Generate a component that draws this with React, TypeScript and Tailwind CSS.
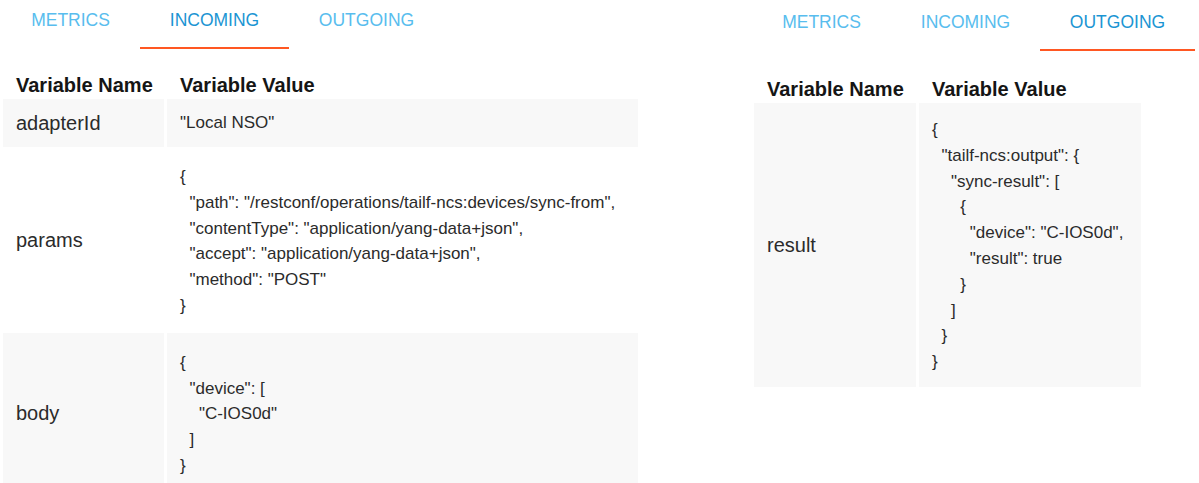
import React from 'react';

type Row = { name: string; value: unknown };

const incoming: Row[] = [
  { name: 'adapterId', value: 'Local NSO' },
  {
    name: 'params',
    value: {
      path: '/restconf/operations/tailf-ncs:devices/sync-from',
      contentType: 'application/yang-data+json',
      accept: 'application/yang-data+json',
      method: 'POST',
    },
  },
  { name: 'body', value: { device: ['C-IOS0d'] } },
];

const outgoing: Row[] = [
  {
    name: 'result',
    value: {
      'tailf-ncs:output': {
        'sync-result': [{ device: 'C-IOS0d', result: true }],
      },
    },
  },
];

const tabs = [
  { label: 'METRICS', w: 'w-[139px]' },
  { label: 'INCOMING', w: 'w-[149px]' },
  { label: 'OUTGOING', w: 'w-[155px]' },
];

function Tabs({ active }: { active: string }) {
  return (
    <div className="flex pl-[1px]">
      {tabs.map((t) => (
        <div
          key={t.label}
          className={`${t.w} h-[49px] pt-[8px] text-center text-[17.5px] leading-[24px] border-b-2 ${
            t.label === active ? 'border-[#ff5722] text-[#1b95d3]' : 'border-transparent text-[#58bdee]'
          }`}
        >
          {t.label}
        </div>
      ))}
    </div>
  );
}

function VarTable({
  rows,
  nameW,
  valueW,
  pad = 'pt-[17px] pb-[14px]',
}: {
  rows: Row[];
  nameW: string;
  valueW: string;
  pad?: string;
}) {
  return (
    <table className="border-separate border-spacing-x-[3px] border-spacing-y-0">
      <thead>
        <tr>
          <th className={`${nameW} pl-[13px] pr-[6px] pt-[24px] pb-[2px] text-left text-[20px] leading-[24px] font-bold text-[#151515] whitespace-nowrap`}>
            Variable Name
          </th>
          <th className={`${valueW} px-[13px] pt-[24px] pb-[2px] text-left text-[20px] leading-[24px] font-bold text-[#151515] whitespace-nowrap`}>
            Variable Value
          </th>
        </tr>
      </thead>
      <tbody>
        {rows.map((r, i) => {
          const multi = typeof r.value === 'object';
          const bg = i % 2 === 0 ? 'bg-[#f8f8f8]' : 'bg-white';
          return (
            <tr key={r.name}>
              <td className={`${bg} pl-[13px] pr-[6px] align-middle text-[20px] leading-[24px] text-[#2b2b2b]`}>{r.name}</td>
              <td
                className={`${bg} px-[13px] align-middle text-[17px] leading-[25.8px] text-[#2b2b2b] whitespace-pre ${
                  multi ? pad : 'h-[48px]'
                }`}
              >
                {JSON.stringify(r.value, null, 2)}
              </td>
            </tr>
          );
        })}
      </tbody>
    </table>
  );
}

export default function App() {
  return (
    <div className="w-[1199px] h-[483px] overflow-hidden bg-white flex font-['Liberation_Sans',Arial,sans-serif]">
      <div className="w-[641px] shrink-0">
        <Tabs active="INCOMING" />
        <VarTable rows={incoming} nameW="w-[161px]" valueW="w-[471px]" />
      </div>
      <div className="ml-[110px] mt-[2px] w-[448px] shrink-0">
        <Tabs active="OUTGOING" />
        <div className="mt-[2px]">
          <VarTable rows={outgoing} nameW="w-[162px]" valueW="w-[222px]" pad="pt-[14px] pb-[12px]" />
        </div>
      </div>
    </div>
  );
}
